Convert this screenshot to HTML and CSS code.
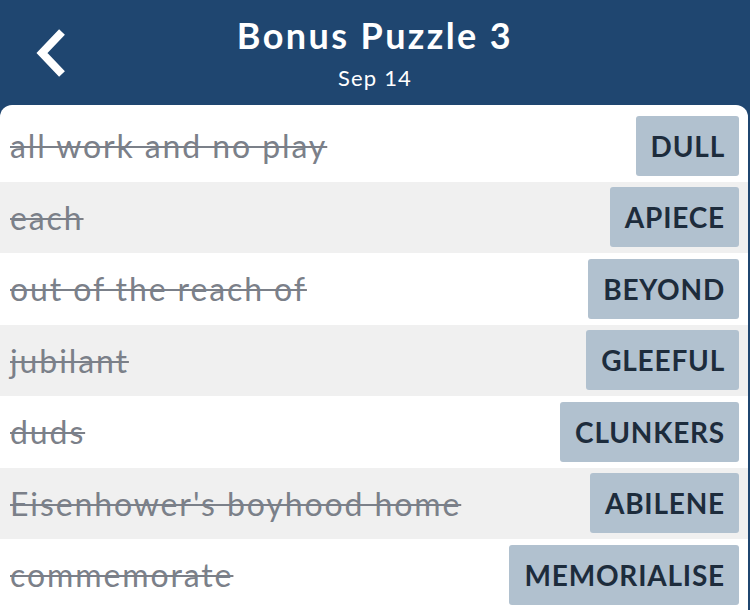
FILE: index.html
```html
<!DOCTYPE html>
<html lang="en">
<head>
  <meta charset="UTF-8">
  <meta name="viewport" content="width=device-width, initial-scale=1.0">
  <title>Bonus Puzzle 3</title>
  <link rel="stylesheet" href="styles.css">
</head>
<body>
  <header class="top-bar">
    <button class="back-btn" aria-label="Back">
      <svg width="34" height="50" viewBox="0 0 34 50">
        <polyline points="28,4 8,25 28,46" fill="none" stroke="#fff" stroke-width="8" stroke-linejoin="miter"/>
      </svg>
    </button>
    <div class="titles">
      <h1>Bonus Puzzle 3</h1>
      <div class="date">Sep 14</div>
    </div>
  </header>

  <div class="panel">
    <div class="clue-row">
      <span class="clue">all work and no play</span>
      <span class="answer">DULL</span>
    </div>
    <div class="clue-row">
      <span class="clue">each</span>
      <span class="answer">APIECE</span>
    </div>
    <div class="clue-row">
      <span class="clue">out of the reach of</span>
      <span class="answer">BEYOND</span>
    </div>
    <div class="clue-row">
      <span class="clue">jubilant</span>
      <span class="answer">GLEEFUL</span>
    </div>
    <div class="clue-row">
      <span class="clue">duds</span>
      <span class="answer">CLUNKERS</span>
    </div>
    <div class="clue-row">
      <span class="clue">Eisenhower's boyhood home</span>
      <span class="answer">ABILENE</span>
    </div>
    <div class="clue-row">
      <span class="clue">commemorate</span>
      <span class="answer">MEMORIALISE</span>
    </div>
  </div>
</body>
</html>
```

FILE: styles.css
```css
body {
  margin: 0;
  background: #1f4670;
  font-family: Lato, "Noto Sans", sans-serif;
  height: 610px;
  overflow: hidden;
}
.top-bar {
  position: relative;
  height: 105px;
  color: white;
}
.back-btn {
  position: absolute;
  left: 34px;
  top: 28px;
  background: none;
  border: 0;
  padding: 0;
}
.titles {
  text-align: center;
  padding-top: 14px;
}
.titles h1 {
  margin: 0;
  font-weight: 700;
  font-size: 36px;
  line-height: 42px;
  letter-spacing: 2.4px;
}
.date {
  font-size: 22px;
  line-height: 26px;
  letter-spacing: 1.2px;
  margin-top: 9px;
}
.panel {
  background: white;
  border-radius: 12px 12px 0 0;
  margin-right: 2px;
  padding-top: 5px;
  height: 510px;
}
.clue-row {
  display: flex;
  align-items: center;
  justify-content: space-between;
  height: 71.5px;
  padding: 0 9px 0 10px;
}
.clue-row:nth-child(even) {
  background: #f0f0f0;
}
.clue {
  font-size: 32px;
  letter-spacing: 1.9px;
  color: #7b8089;
  text-decoration: line-through;
  text-decoration-thickness: 2px;
}
.answer {
  background: #b1c1cf;
  color: #1d2c3c;
  font-weight: 700;
  font-size: 28px;
  line-height: 60px;
  letter-spacing: 0.8px;
  padding: 0 14px 0 15px;
  border-radius: 3px;
}
```
